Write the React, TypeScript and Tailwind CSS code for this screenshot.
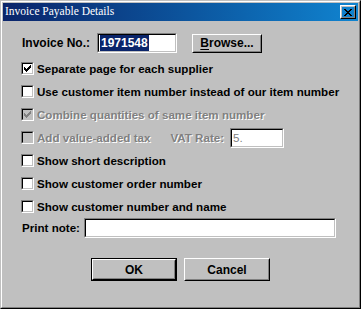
import React from 'react'

const sans = "font-['Liberation_Sans',Arial,sans-serif]"

function Checkbox({ checked, disabled }: { checked?: boolean; disabled?: boolean }) {
  return (
    <span className="block w-[13px] h-[13px] shrink-0 border border-t-[#808080] border-l-[#808080] border-r-white border-b-white">
      <span
        className={`flex items-center justify-center w-full h-full border border-t-black border-l-black border-r-[#c0c0c0] border-b-[#c0c0c0] ${
          disabled ? 'bg-[#c0c0c0]' : 'bg-white'
        }`}
      >
        {checked && (
          <svg width="7" height="7" viewBox="0 0 7 7" shapeRendering="crispEdges">
            <path
              d="M0 2h1v3h-1zM1 3h1v3h-1zM2 4h1v3h-1zM3 3h1v3h-1zM4 2h1v3h-1zM5 1h1v3h-1zM6 0h1v3h-1z"
              fill={disabled ? '#808080' : '#000'}
            />
          </svg>
        )}
      </span>
    </span>
  )
}

function Row({
  label,
  checked,
  disabled,
  children
}: {
  label: string
  checked?: boolean
  disabled?: boolean
  children?: React.ReactNode
}) {
  return (
    <div className="flex items-center h-[23px]">
      <Checkbox checked={checked} disabled={disabled} />
      <span
        className={`ml-[3px] whitespace-nowrap ${
          disabled ? 'text-[#808080] [text-shadow:1px_1px_0_#fff]' : 'text-black'
        }`}
      >
        {label}
      </span>
      {children}
    </div>
  )
}

function Sunken({ className, children }: { className?: string; children?: React.ReactNode }) {
  return (
    <div
      className={`border border-t-[#808080] border-l-[#808080] border-r-white border-b-white ${className ?? ''}`}
    >
      <div className="flex items-center h-full border border-t-black border-l-black border-r-[#c0c0c0] border-b-[#c0c0c0] bg-white pl-[1px]">
        {children}
      </div>
    </div>
  )
}

function Button({
  className,
  isDefault,
  children
}: {
  className?: string
  isDefault?: boolean
  children: React.ReactNode
}) {
  const inner = (
    <div className="h-full border border-t-white border-l-white border-r-black border-b-black">
      <div className="flex items-center justify-center h-full border border-t-[#c0c0c0] border-l-[#c0c0c0] border-r-[#808080] border-b-[#808080]">
        {children}
      </div>
    </div>
  )
  return isDefault ? (
    <div className={`border border-black ${className ?? ''}`}>{inner}</div>
  ) : (
    <div className={className}>{inner}</div>
  )
}

export default function App() {
  return (
    <div
      className={`w-[361px] h-[309px] bg-[#c0c0c0] border border-t-[#c0c0c0] border-l-[#c0c0c0] border-r-black border-b-black ${sans}`}
    >
      <div className="flex flex-col h-full p-px border border-t-white border-l-white border-r-[#808080] border-b-[#808080]">
        <div className="flex items-center justify-between h-[18px] pl-[2px] pr-[2px] bg-gradient-to-r from-[#0a246a] to-[#1084d0]">
          <span className="text-white text-[11.5px] leading-none font-['Liberation_Serif',serif]">
            Invoice Payable Details
          </span>
          <Button className="w-[16px] h-[14px]">
            <svg width="8" height="7" viewBox="0 0 8 7" shapeRendering="crispEdges">
              <path
                d="M0 0h2v1h-2zM6 0h2v1h-2zM1 1h2v1h-2zM5 1h2v1h-2zM2 2h4v1h-4zM3 3h2v1h-2zM2 4h4v1h-4zM1 5h2v1h-2zM5 5h2v1h-2zM0 6h2v1h-2zM6 6h2v1h-2z"
                fill="#000"
              />
            </svg>
          </Button>
        </div>

        <div className="flex flex-col pl-[18px] text-[11.6px] font-bold leading-none">
          <div className="flex items-center h-[20px] mt-[12px]">
            <span className="w-[76px] pl-[1px] text-[12px]">Invoice No.:</span>
            <Sunken className="w-[80px] h-[20px]">
              <span className="bg-[#0a246a] text-white text-[12px] px-[1px] py-[2px]">1971548</span>
            </Sunken>
            <Button className="ml-[15px] w-[70px] h-[19px]">
              <span className="text-[12px]">
                <span className="underline underline-offset-2">B</span>rowse...
              </span>
            </Button>
          </div>

          <div className="flex flex-col mt-[4px]">
            <Row label="Separate page for each supplier" checked />
            <Row label="Use customer item number instead of our item number" />
            <Row label="Combine quantities of same item number" checked disabled />
            <Row label="Add value-added tax" disabled>
              <span className="ml-[20px] text-[#808080] [text-shadow:1px_1px_0_#fff]">VAT Rate:</span>
              <Sunken className="ml-[6px] w-[54px] h-[20px]">
                <span className="text-[#808080] font-normal">5.</span>
              </Sunken>
            </Row>
            <Row label="Show short description" />
            <Row label="Show customer order number" />
            <Row label="Show customer number and name" />
          </div>

          <div className="flex items-center h-[20px]">
            <span className="w-[63px] pl-[1px]">Print note:</span>
            <Sunken className="w-[252px] h-[20px]" />
          </div>
        </div>

        <div className="flex justify-center gap-[7px] mt-[20px] text-[12px] font-bold leading-none">
          <Button isDefault className="w-[86px] h-[23px]">
            OK
          </Button>
          <Button className="w-[86px] h-[23px]">Cancel</Button>
        </div>
      </div>
    </div>
  )
}
